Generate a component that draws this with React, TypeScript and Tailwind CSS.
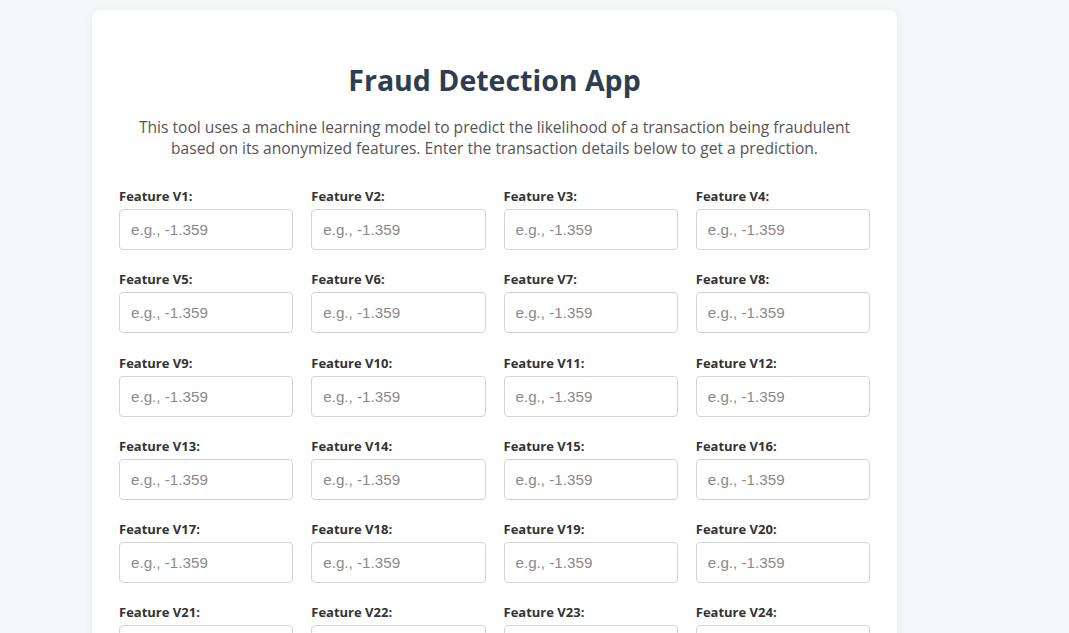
const features = Array.from({ length: 28 }, (_, i) => `V${i + 1}`);

export default function App() {
  return (
    <div className="min-h-screen bg-[#f5f6f8] pt-[10px] pb-10 font-['Open_Sans',sans-serif]">
      <div className="ml-[92px] w-[805px] rounded-lg bg-white px-[27px] pt-[50px] pb-10 shadow-[0_2px_10px_rgba(0,0,0,0.06)]">
        <h1 className="text-center text-[28.5px] font-bold leading-[40px] text-[#2c3e50]">
          Fraud Detection App
        </h1>
        <p className="mx-auto mt-[17px] text-center text-[15.6px] leading-[21px] text-[#555]">
          This tool uses a machine learning model to predict the likelihood of a transaction being fraudulent
          <br />
          based on its anonymized features. Enter the transaction details below to get a prediction.
        </p>
        <div className="mt-[30px] grid grid-cols-4 gap-x-[18px] gap-y-[22.3px]">
          {features.map((f) => (
            <div key={f} className="flex flex-col">
              <label className="mb-[5px] text-[13px] font-bold leading-[15px] text-[#333]">
                Feature {f}:
              </label>
              <input
                type="text"
                placeholder="e.g., -1.359"
                className="h-[41px] w-full rounded border border-[#d4d4d4] px-[11px] font-['Liberation_Sans',Arial,sans-serif] text-[15.2px] text-[#333] placeholder:text-[#8a8a8a] focus:outline-none"
              />
            </div>
          ))}
        </div>
      </div>
    </div>
  );
}
